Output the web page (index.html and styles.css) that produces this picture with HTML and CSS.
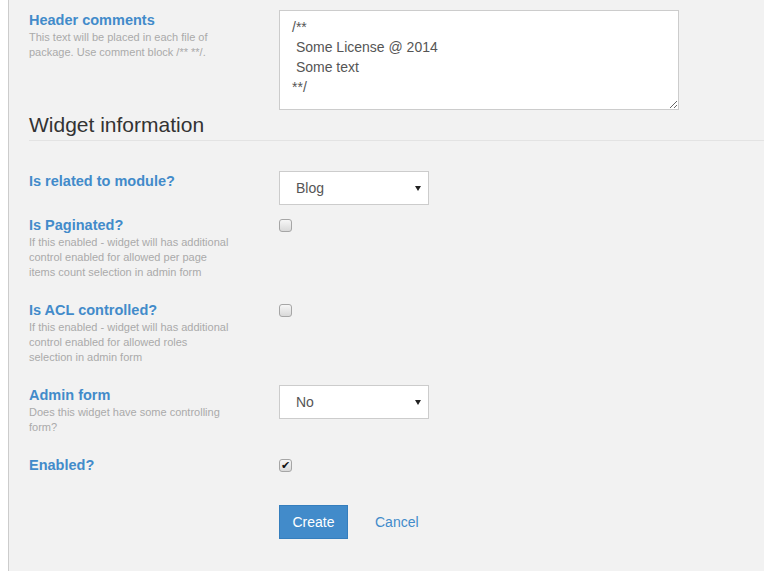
FILE: index.html
```html
<!DOCTYPE html>
<html>
<head>
<meta charset="utf-8">
<link rel="stylesheet" href="styles.css">
</head>
<body>
<div class="panel">
  <div class="row row-first">
    <div class="label-col">
      <label class="title">Header comments</label>
      <p class="help">This text will be placed in each file of package. Use comment block /** **/.</p>
    </div>
    <div class="control">
      <textarea class="textarea">/**
 Some License @ 2014
 Some text
**/</textarea>
    </div>
  </div>

  <h2 class="legend">Widget information</h2>

  <div class="row">
    <div class="label-col">
      <label class="title">Is related to module?</label>
    </div>
    <div class="control">
      <div class="select-wrap">
        <select class="select"><option>Blog</option></select>
      </div>
    </div>
  </div>

  <div class="row">
    <div class="label-col">
      <label class="title">Is Paginated?</label>
      <p class="help">If this enabled - widget will has additional control enabled for allowed per page items count selection in admin form</p>
    </div>
    <div class="control">
      <input type="checkbox" class="check">
    </div>
  </div>

  <div class="row">
    <div class="label-col">
      <label class="title">Is ACL controlled?</label>
      <p class="help">If this enabled - widget will has additional control enabled for allowed roles selection in admin form</p>
    </div>
    <div class="control">
      <input type="checkbox" class="check">
    </div>
  </div>

  <div class="row">
    <div class="label-col">
      <label class="title">Admin form</label>
      <p class="help">Does this widget have some controlling form?</p>
    </div>
    <div class="control">
      <div class="select-wrap">
        <select class="select"><option>No</option></select>
      </div>
    </div>
  </div>

  <div class="row">
    <div class="label-col">
      <label class="title">Enabled?</label>
    </div>
    <div class="control">
      <input type="checkbox" class="check" checked>
    </div>
  </div>

  <div class="row actions">
    <div></div>
    <div class="buttons">
      <button class="btn">Create</button>
      <a class="link" href="#">Cancel</a>
    </div>
  </div>
</div>
</body>
</html>
```
FILE: styles.css
```css
html, body {
  margin: 0;
  padding: 0;
  background: #ffffff;
  font-family: "Liberation Sans", Arial, sans-serif;
}

.panel {
  margin-left: 8px;
  border-left: 1px solid #cccccc;
  background: #f2f2f2;
  height: 571px;
  box-sizing: border-box;
  padding: 10px 0 0 20px;
  overflow: hidden;
}

.row {
  display: grid;
  grid-template-columns: 250px auto;
  align-items: start;
  margin-bottom: 10px;
}

.row-first {
  margin-bottom: 0;
}

.label-col {
  display: flex;
  flex-direction: column;
}

.title {
  display: block;
  font-weight: bold;
  font-size: 14.5px;
  line-height: 20px;
  color: #428bca;
}

.help {
  margin: 0 0 10px;
  max-width: 204px;
  font-size: 11px;
  line-height: 15px;
  color: #aaaaaa;
}

.control {
  display: flex;
  align-items: flex-start;
}

.textarea {
  display: block;
  width: 400px;
  height: 100px;
  box-sizing: border-box;
  margin: 0;
  padding: 6px 12px;
  border: 1px solid #cccccc;
  border-radius: 0;
  background: #ffffff;
  font-family: "Liberation Sans", Arial, sans-serif;
  font-size: 14px;
  line-height: 20px;
  color: #555555;
  resize: both;
}

.legend {
  margin: 0 0 30px;
  padding: 0;
  font-weight: normal;
  font-size: 21px;
  line-height: 30px;
  color: #333333;
  border-bottom: 1px solid #e3e3e3;
}

.select-wrap {
  position: relative;
  width: 150px;
}

.select-wrap::after {
  content: "";
  position: absolute;
  right: 8px;
  top: 15px;
  border-left: 3px solid transparent;
  border-right: 3px solid transparent;
  border-top: 5px solid #222222;
  pointer-events: none;
}

.select {
  display: block;
  width: 150px;
  height: 34px;
  box-sizing: border-box;
  margin: 0;
  padding: 0 0 0 16px;
  border: 1px solid #cccccc;
  border-radius: 0;
  background: #ffffff;
  font-family: "Liberation Sans", Arial, sans-serif;
  font-size: 14px;
  color: #555555;
  -webkit-appearance: none;
  appearance: none;
}

.check {
  -webkit-appearance: none;
  appearance: none;
  position: relative;
  width: 13px;
  height: 13px;
  margin: 4px 0 0;
  box-sizing: border-box;
  border: 1px solid #a6a6a6;
  border-radius: 3px;
  background: linear-gradient(#f6f6f6, #d9d9d9);
}

.check:checked::after {
  content: "\2714";
  position: absolute;
  left: 1px;
  top: -1px;
  font-size: 11px;
  line-height: 12px;
  color: #111111;
}

.actions {
  margin-top: 30px;
}

.buttons {
  display: flex;
  align-items: center;
  gap: 27px;
}

.btn {
  width: 69px;
  height: 34px;
  padding: 0;
  border: 1px solid #357ebd;
  border-radius: 0;
  background: #428bca;
  color: #ffffff;
  font-family: "Liberation Sans", Arial, sans-serif;
  font-size: 14px;
}

.link {
  font-size: 14px;
  color: #428bca;
  text-decoration: none;
}
```
